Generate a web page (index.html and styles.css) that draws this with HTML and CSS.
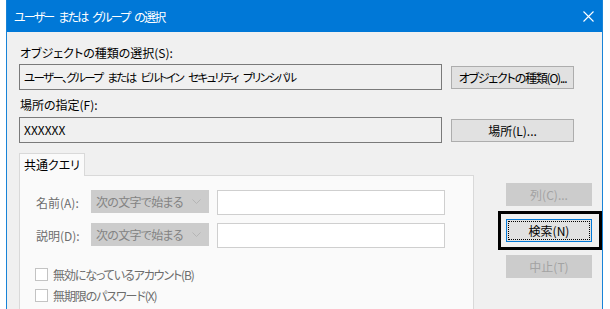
FILE: index.html
```html
<!DOCTYPE html>
<html lang="ja">
<head>
    <meta charset="UTF-8">
    <title>ユーザー または グループ の選択</title>
    <link rel="stylesheet" href="styles.css">
</head>
<body>
    <div class="window">
        <div class="titlebar">
            <span class="title">ユーザー または グループ の選択</span>
            <svg class="close" width="11" height="11" viewBox="0 0 11 11">
                <path d="M0.5 0.5 L10.5 10.5 M10.5 0.5 L0.5 10.5" stroke="#fff" stroke-width="1.1" fill="none"/>
            </svg>
        </div>

        <div class="content">
            <div class="label">オブジェクトの種類の選択(S):</div>
            <div class="field-row">
                <div class="readonly-box narrow">ユーザー、グループ または ビルトイン セキュリティ プリンシパル</div>
                <button class="btn"><span class="narrow">オブジェクトの種類(O)...</span></button>
            </div>

            <div class="label label-second">場所の指定(F):</div>
            <div class="field-row">
                <div class="readonly-box">XXXXXX</div>
                <button class="btn">場所(L)...</button>
            </div>

            <div class="query-area">
                <div class="tabs">
                    <div class="tab active">共通クエリ</div>
                    <div class="tab-panel">
                        <div class="query-row">
                            <span class="query-label">名前(A):</span>
                            <div class="combo">
                                <span>次の文字で始まる</span>
                                <svg width="9" height="6" viewBox="0 0 9 6"><polyline points="0.5,0.5 4.5,4.5 8.5,0.5" stroke="#b5b5b5" fill="none"/></svg>
                            </div>
                            <div class="query-input"></div>
                        </div>
                        <div class="query-row">
                            <span class="query-label">説明(D):</span>
                            <div class="combo">
                                <span>次の文字で始まる</span>
                                <svg width="9" height="6" viewBox="0 0 9 6"><polyline points="0.5,0.5 4.5,4.5 8.5,0.5" stroke="#b5b5b5" fill="none"/></svg>
                            </div>
                            <div class="query-input"></div>
                        </div>
                        <div class="check-row first"><span class="checkbox"></span>無効になっているアカウント(B)</div>
                        <div class="check-row"><span class="checkbox"></span>無期限のパスワード(X)</div>
                    </div>
                </div>

                <div class="side-buttons">
                    <button class="btn side disabled">列(C)...</button>
                    <div class="highlight-wrap">
                        <button class="btn side focused"><span class="focus-ring">検索(N)</span></button>
                        <div class="highlight"></div>
                    </div>
                    <button class="btn side disabled">中止(T)</button>
                </div>
            </div>
        </div>
    </div>
</body>
</html>
```

FILE: styles.css
```css
body {
    margin: 0;
    background: #fff;
    font-family: "Noto Sans CJK JP", "Noto Sans", sans-serif;
    font-size: 12px;
    color: #000;
    font-feature-settings: "palt";
}
.window {
    margin-left: 6px;
    width: 595px;
    height: 309px;
    background: #f0f0f0;
    border-left: 1px solid #1883d7;
    border-right: 1px solid #1883d7;
    overflow: hidden;
}
.titlebar {
    height: 32px;
    background: #0078d7;
    color: #fff;
    display: flex;
    align-items: center;
    justify-content: space-between;
    padding: 0 9px 0 8px;
    margin: 0 -1px;
}
.title {
    font-size: 12px;
    padding-top: 1px;
    letter-spacing: -1.8px;
    word-spacing: 4px;
}
.close {
    margin-top: 1px;
}
.content {
    padding: 13px 0 0 12px;
}
.label {
    line-height: 16px;
    height: 16px;
    margin-left: 1px;
    margin-bottom: 3px;
}
.label-second {
    margin-top: 7px;
    margin-bottom: 4px;
}
.field-row {
    display: flex;
    align-items: center;
}
.readonly-box {
    width: 417px;
    height: 24px;
    line-height: 24px;
    border: 1px solid #7a7a7a;
    padding-left: 4px;
    background: #f0f0f0;
    white-space: nowrap;
}
.readonly-box.narrow {
    font-size: 11.5px;
    letter-spacing: -1.6px;
    word-spacing: 4px;
}
.btn {
    font-family: inherit;
    font-size: 12px;
    font-feature-settings: "palt";
    background: #e1e1e1;
    border: 1px solid #adadad;
    color: #000;
    height: 23px;
    width: 123px;
    margin: 0 0 0 9px;
    padding: 0;
    white-space: nowrap;
}
.btn .narrow {
    letter-spacing: -1.2px;
}
.query-area {
    display: flex;
    margin-top: 9px;
}
.tabs {
    width: 455px;
}
.tab {
    display: inline-block;
    height: 22px;
    line-height: 22px;
    width: 64px;
    text-align: center;
    border: 1px solid #d9d9d9;
    border-bottom: none;
    background: #fafafa;
    position: relative;
    top: 1px;
}
.tab-panel {
    border: 1px solid #d9d9d9;
    background: #fafafa;
    height: 160px;
    padding: 14px 0 0 16px;
    box-sizing: border-box;
}
.query-row {
    display: flex;
    align-items: flex-start;
    height: 33px;
}
.query-label {
    width: 55px;
    color: #6d6d6d;
    line-height: 25px;
}
.combo {
    width: 105px;
    height: 23px;
    background: #cccccc;
    color: #838383;
    display: flex;
    align-items: center;
    justify-content: space-between;
    padding: 0 8px 0 5px;
}
.combo span {
    line-height: 23px;
    letter-spacing: -0.7px;
}
.query-input {
    width: 226px;
    height: 23px;
    margin-left: 8px;
    border: 1px solid #cfcfcf;
    background: #fff;
}
.check-row {
    display: flex;
    align-items: center;
    color: #6d6d6d;
    height: 21px;
    margin-left: -1px;
    letter-spacing: -1.1px;
}
.check-row.first {
    margin-top: 8px;
}
.checkbox {
    width: 11px;
    height: 11px;
    border: 1px solid #c3c3c3;
    background: #fff;
    margin-right: 5px;
}
.side-buttons {
    display: flex;
    flex-direction: column;
    padding-top: 31px;
    margin-left: 32px;
}
.btn.side {
    width: 86px;
    margin: 0;
}
.btn.disabled {
    background: #cccccc;
    border-color: #cccccc;
    color: #a3a3a3;
}
.highlight-wrap {
    position: relative;
    margin: 13px 0 13px 0;
}
.btn.focused {
    border: 1px solid #0078d7;
    padding: 1px;
    display: block;
}
.focus-ring {
    display: block;
    height: 17px;
    line-height: 17px;
    border: 1px dotted #000;
}
.highlight {
    position: absolute;
    left: -8px;
    top: -8px;
    right: -10px;
    bottom: -8px;
    border: 3px solid #000;
}
```
